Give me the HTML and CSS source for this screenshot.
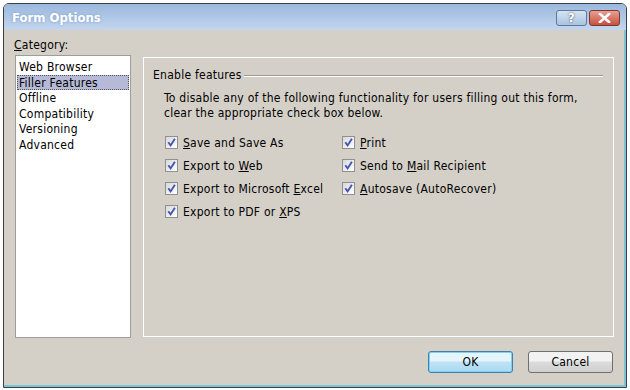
FILE: index.html
```html
<!doctype html>
<html>
<head>
<meta charset="UTF-8">
<title>Form Options</title>
<link rel="stylesheet" href="styles.css">
</head>
<body>
<div class="window">
  <div class="titlebar">
    <span class="title">Form Options</span>
    <div class="caption-buttons">
      <span class="cap-btn help">?</span>
      <span class="cap-btn close">
        <svg width="13" height="10" viewBox="0 0 13 10"><path d="M2 1 L11 9 M11 1 L2 9" stroke="#fff" stroke-width="2.6" stroke-linecap="square"/></svg>
      </span>
    </div>
  </div>
  <div class="client">
    <div class="main">
      <div class="category">
        <div class="label"><u>C</u>ategory:</div>
        <ul class="listbox">
          <li>Web Browser</li>
          <li class="selected">Filler Features</li>
          <li>Offline</li>
          <li>Compatibility</li>
          <li>Versioning</li>
          <li>Advanced</li>
        </ul>
      </div>
      <div class="panel">
        <div class="group-head">
          <span>Enable features</span>
          <span class="rule"></span>
        </div>
        <p class="intro">To disable any of the following functionality for users filling out this form,<br>clear the appropriate check box below.</p>
        <div class="checks">
          <div class="col">
            <div class="check"><span class="box"></span><span><u>S</u>ave and Save As</span></div>
            <div class="check"><span class="box"></span><span>Export to <u>W</u>eb</span></div>
            <div class="check"><span class="box"></span><span>Export to Microsoft <u>E</u>xcel</span></div>
            <div class="check"><span class="box"></span><span>Export to PDF or <u>X</u>PS</span></div>
          </div>
          <div class="col">
            <div class="check"><span class="box"></span><span><u>P</u>rint</span></div>
            <div class="check"><span class="box"></span><span>Send to <u>M</u>ail Recipient</span></div>
            <div class="check"><span class="box"></span><span><u>A</u>utosave (AutoRecover)</span></div>
          </div>
        </div>
      </div>
    </div>
    <div class="buttons">
      <span class="btn default">OK</span>
      <span class="btn">Cancel</span>
    </div>
  </div>
</div>
</body>
</html>
```

FILE: styles.css
```css
body {
  margin: 0;
  padding: 3px;
  background-color: #fff;
  font-family: "DejaVu Sans Condensed", "DejaVu Sans", sans-serif;
  font-size: 12px;
  letter-spacing: 0.25px;
  color: #000;
}

.window {
  width: 624px;
  height: 385px;
  box-sizing: border-box;
  border: 1px solid #3a3f44;
  border-radius: 6px 6px 0 0;
  display: flex;
  flex-direction: column;
  overflow: hidden;
}

.titlebar {
  height: 26px;
  background: linear-gradient(#9ab8de, #c4d6ee);
  display: flex;
  align-items: center;
  justify-content: space-between;
  padding: 0 6px 0 8px;
}

.title {
  color: #fff;
  font-weight: bold;
  font-size: 13px;
  letter-spacing: 0;
  text-shadow: 0 0 3px #7f9cc4;
}

.caption-buttons {
  display: flex;
  gap: 2px;
  margin-top: 1px;
}

.cap-btn {
  width: 29px;
  height: 14px;
  border: 1px solid #5f7894;
  border-radius: 3px;
  display: flex;
  align-items: center;
  justify-content: center;
}

.help {
  background: linear-gradient(#d6e4f3, #a9c3e2);
  color: #fff;
  font-weight: bold;
  font-size: 13px;
  text-shadow: 0 0 2px #333;
}

.close {
  border-color: #7a3a32;
  background: linear-gradient(#e8a093, #c7503c);
}

.client {
  flex: 1;
  background-color: #d4d0c8;
  border-right: 2px solid #7cc3d8;
  border-bottom: 2px solid #7cc3d8;
  padding: 8px 8px 0 10px;
  display: flex;
  flex-direction: column;
}

.main {
  display: flex;
}

.category {
  width: 117px;
}

.label {
  height: 17px;
  line-height: 15px;
}

.listbox {
  margin: 0 0 0 1px;
  padding: 3px 1px 2px;
  list-style: none;
  height: 283px;
  box-sizing: border-box;
  background-color: #fff;
  border: 1px solid #9d9d9d;
}

.listbox li {
  height: 15.5px;
  line-height: 14px;
  padding: 0 1px;
  border: 1px solid transparent;
  box-sizing: border-box;
}

.listbox li.selected {
  background-color: #b6bad6;
  border: 1px dotted #555;
}

.panel {
  margin: 19px 0 0 12px;
  width: 471px;
  height: 280px;
  box-sizing: border-box;
  border: 1px solid #fff;
  padding: 9px 10px 0 9px;
}

.group-head {
  display: flex;
  align-items: center;
  height: 15px;
}

.rule {
  flex: 1;
  height: 1px;
  margin: 2px 0 0 2px;
  background-color: #9c9a94;
  border-bottom: 1px solid #fff;
}

.intro {
  margin: 9px 0 0 11px;
  line-height: 15px;
}

.checks {
  display: flex;
  margin: 10px 0 0 12px;
}

.col {
  width: 177px;
}

.check {
  height: 23px;
  display: flex;
  align-items: center;
}

.box {
  width: 11px;
  height: 11px;
  margin-right: 5px;
  border: 1px solid #8f9091;
  background-image: url("data:image/svg+xml;utf8,<svg xmlns='http://www.w3.org/2000/svg' width='11' height='11'><path d='M2.3 5.3 L4.6 8.4 L8.9 1.8' fill='none' stroke='%234456b0' stroke-width='1.9'/></svg>"), linear-gradient(135deg, #d8d8d8, #fff);
}

.buttons {
  display: flex;
  justify-content: flex-end;
  gap: 15px;
  margin: 13px 3px 0 0;
}

.btn {
  width: 83px;
  height: 20px;
  border: 1px solid #707070;
  border-radius: 3px;
  background: linear-gradient(#f2f2f2 45%, #dcdcdc 50%, #cfcfcf);
  display: flex;
  align-items: center;
  justify-content: center;
}

.btn.default {
  border-color: #3c7fb1;
  background: linear-gradient(#e6f5fc 45%, #bfe3f6 50%, #a8d9f2);
  box-shadow: inset 0 0 0 1px #7fd0f3;
}
```
